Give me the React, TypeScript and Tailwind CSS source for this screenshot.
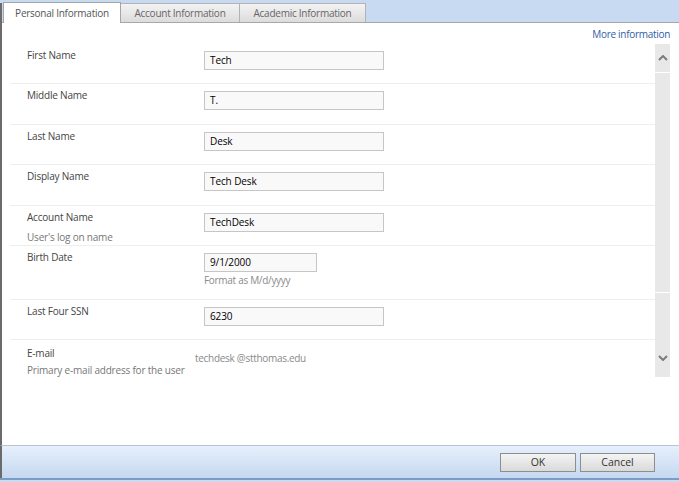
import React from "react";

const font = { fontFamily: '"Open Sans", "Noto Sans", sans-serif' };

function Input({ value, w = "w-[180px]" }: { value: string; w?: string }) {
  return (
    <div
      className={`${w} h-[19px] border border-[#c6c6c6] bg-[#f9f9f9] pl-[5px] flex items-center text-[10px] tracking-[-0.1px] text-black`}
    >
      {value}
    </div>
  );
}

function Row({
  label,
  sub,
  children,
  h = "h-[41px]",
}: {
  label: string;
  sub?: string;
  children: React.ReactNode;
  h?: string;
}) {
  return (
    <div className={`flex ${h} border-b border-[#eeeeee] ml-[8px]`}>
      <div className="w-[194px] pl-[17px] pt-[4px] flex flex-col">
        <div className="text-[10px] leading-[14px] tracking-[-0.2px] text-[#444444]">{label}</div>
        {sub && (
          <div className="text-[10px] leading-[14px] tracking-[-0.2px] mt-[6px] text-[#777777]">{sub}</div>
        )}
      </div>
      <div className="pt-[7px] flex flex-col">{children}</div>
    </div>
  );
}

export default function App() {
  return (
    <div className="w-[679px] h-[482px] bg-white flex flex-col overflow-hidden" style={font}>
      {/* Tab strip */}
      <div className="h-[23px] bg-[#c8daf2] flex items-end border-b border-[#a8a8a8]">
        <div className="w-[2px] h-[20px] bg-[#6b6b6b] mb-[-1px]" />
        <div className="ml-[1px] w-[118px] h-[21px] mb-[-1px] bg-white border-l border-t border-r border-[#a5a5a5] flex items-center justify-center text-[10px] tracking-[-0.25px] text-[#555555]">
          Personal Information
        </div>
        <div className="w-[119px] h-[19px] bg-gradient-to-b from-[#f3f3f3] to-[#dcdcdc] border-t border-r border-[#b3b3b3] flex items-center justify-center text-[10px] tracking-[-0.25px] text-[#666666]">
          Account Information
        </div>
        <div className="w-[126px] h-[19px] bg-gradient-to-b from-[#f3f3f3] to-[#dcdcdc] border-t border-r border-[#b3b3b3] flex items-center justify-center text-[10px] tracking-[-0.25px] text-[#666666]">
          Academic Information
        </div>
      </div>

      {/* Body */}
      <div className="flex-1 border-l-2 border-[#6b6b6b] flex flex-col">
        <div className="h-[21px] flex items-center justify-end pr-[9px] pt-[1px]">
          <span className="text-[10px] leading-[14px] tracking-[-0.3px] text-[#2f5ea5]">More information</span>
        </div>
        <div className="flex h-[333px]">
          <div className="flex-1 flex flex-col">
            <Row label="First Name">
              <Input value="Tech" />
            </Row>
            <Row label="Middle Name">
              <Input value="T." />
            </Row>
            <Row label="Last Name">
              <Input value="Desk" />
            </Row>
            <Row label="Display Name">
              <Input value="Tech Desk" />
            </Row>
            <Row label="Account Name" sub="User's log on name">
              <Input value="TechDesk" />
            </Row>
            <Row label="Birth Date" h="h-[54px]">
              <Input value="9/1/2000" w="w-[113px]" />
              <div className="text-[10px] leading-[14px] tracking-[-0.3px] mt-[1px] text-[#8a8a8a]">Format as M/d/yyyy</div>
            </Row>
            <Row label="Last Four SSN">
              <Input value="6230" />
            </Row>
            <div className="flex ml-[8px]">
              <div className="w-[185px] pl-[17px] pt-[6px] flex flex-col">
                <div className="text-[10px] leading-[14px] tracking-[-0.2px] text-[#444444]">E-mail</div>
                <div className="text-[10px] leading-[14px] tracking-[-0.2px] mt-[3px] text-[#777777] whitespace-nowrap">
                  Primary e-mail address for the user
                </div>
              </div>
              <div className="pt-[11px] text-[10px] leading-[14px] tracking-[-0.3px] text-[#8a8a8a]">techdesk @stthomas.edu</div>
            </div>
          </div>
          {/* Scrollbar */}
          <div className="w-[15px] flex flex-col">
            <div className="h-[28px] bg-[#e8e8e8] flex items-center justify-center">
              <svg width="10" height="6" viewBox="0 0 10 6">
                <path d="M1 5 L5 1 L9 5" fill="none" stroke="#7b7b7b" strokeWidth="2" />
              </svg>
            </div>
            <div className="h-[1px] bg-white" />
            <div className="h-[219px] bg-[#e8e8e8]" />
            <div className="h-[1px] bg-white" />
            <div className="flex-1 bg-[#e8e8e8] flex items-end justify-center pb-[16px]">
              <svg width="10" height="6" viewBox="0 0 10 6">
                <path d="M1 1 L5 5 L9 1" fill="none" stroke="#7b7b7b" strokeWidth="2" />
              </svg>
            </div>
          </div>
          <div className="w-[9px]" />
        </div>
      </div>

      {/* Footer */}
      <div className="h-[33px] border-t border-[#b9c3d1] border-l-2 border-l-[#6b6b6b] bg-gradient-to-b from-[#e6f0fc] to-[#c5d8f0] flex justify-end items-start pt-[7px] pr-[24px] gap-[4px]">
        <button className="w-[76px] h-[19px] border border-[#8e8e8e] bg-gradient-to-b from-[#f4f4f4] to-[#dadada] text-[10.5px] text-[#333333] leading-none">
          OK
        </button>
        <button className="w-[75px] h-[19px] border border-[#8e8e8e] bg-gradient-to-b from-[#f4f4f4] to-[#dadada] text-[10.5px] text-[#333333] leading-none">
          Cancel
        </button>
      </div>
      <div className="h-[2px] bg-[#7c9cc6]" />
      <div className="h-[2px] bg-[#c9dcf3]" />
    </div>
  );
}
